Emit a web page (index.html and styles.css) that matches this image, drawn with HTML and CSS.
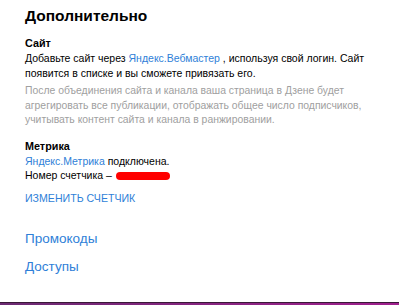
FILE: index.html
```html
<!DOCTYPE html>
<html lang="ru">
<head>
<meta charset="utf-8">
<link rel="stylesheet" href="styles.css">
</head>
<body>
<div class="page">
  <main class="content">
    <h1 class="title">Дополнительно</h1>
    <section class="block">
      <h2 class="label">Сайт</h2>
      <p class="text">Добавьте сайт через <a class="link">Яндекс.Вебмастер</a> , используя свой логин. Сайт появится в списке и вы сможете привязать его.</p>
      <p class="hint">После объединения сайта и канала ваша страница в Дзене будет агрегировать все публикации, отображать общее число подписчиков, учитывать контент сайта и канала в ранжировании.</p>
    </section>
    <section class="block metrika">
      <h2 class="label">Метрика</h2>
      <p class="text"><a class="link">Яндекс.Метрика</a> подключена.<br>Номер счетчика – <span class="redact"></span></p>
      <a class="action">Изменить счетчик</a>
    </section>
    <nav class="menu">
      <a class="menu-link">Промокоды</a>
      <a class="menu-link">Доступы</a>
    </nav>
  </main>
  <div class="bar"></div>
</div>
</body>
</html>
```
FILE: styles.css
```css
html, body {
  margin: 0;
  padding: 0;
  background: #fff;
}
body {
  font-family: "Liberation Sans", Arial, sans-serif;
  color: #000;
}
.page {
  height: 305px;
  display: flex;
  flex-direction: column;
}
.content {
  flex: 1;
  width: 350px;
  padding: 5px 0 0 25px;
}
.title {
  margin: 0;
  font-size: 15.5px;
  font-weight: 700;
  line-height: 22px;
}
.block {
  margin-top: 9px;
}
.label {
  margin: 0;
  font-size: 10.8px;
  font-weight: 700;
  line-height: 15px;
}
.text {
  margin: 0;
  font-size: 10.5px;
  line-height: 14.5px;
}
.hint {
  margin: 4px 0 0;
  font-size: 10.4px;
  line-height: 14.5px;
  color: #a0a0a0;
}
.link {
  color: #2f7fd8;
}
.metrika {
  margin-top: 11px;
}
.redact {
  display: inline-block;
  width: 54px;
  height: 8px;
  margin-left: 1px;
  background: #ff0000;
  border-radius: 4px;
  vertical-align: -1px;
}
.action {
  display: block;
  margin-top: 8px;
  font-size: 10.6px;
  line-height: 14px;
  text-transform: uppercase;
  color: #2f7fd8;
}
.menu {
  display: flex;
  flex-direction: column;
  gap: 10px;
  margin-top: 25px;
}
.menu-link {
  font-size: 13.5px;
  line-height: 18px;
  color: #2f7fd8;
}
.bar {
  height: 3px;
  background: linear-gradient(90deg, #6b2a72, #a0208e);
  border-top: 1px solid #3a1838;
  box-sizing: border-box;
}
```
